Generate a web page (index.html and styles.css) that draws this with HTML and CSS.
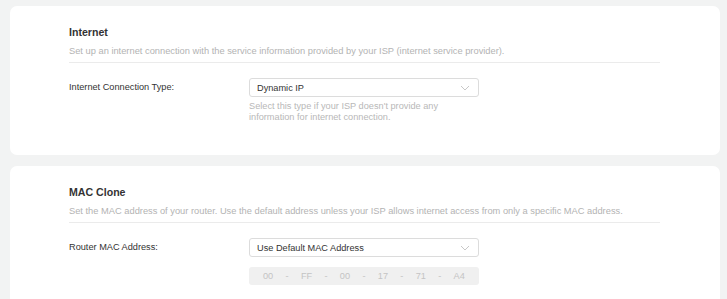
FILE: index.html
```html
<!DOCTYPE html>
<html>
<head>
<meta charset="utf-8">
<link rel="stylesheet" href="styles.css">
</head>
<body>
<div class="page">
  <section class="card">
    <h2 class="title">Internet</h2>
    <p class="desc">Set up an internet connection with the service information provided by your ISP (internet service provider).</p>
    <div class="row">
      <div class="label">Internet Connection Type:</div>
      <div class="field">
        <div class="select"><span>Dynamic IP</span><svg class="chev" width="10" height="6" viewBox="0 0 10 6"><path d="M1 1 L5 5 L9 1" fill="none" stroke="#c8c8c8" stroke-width="1"/></svg></div>
        <p class="hint">Select this type if your ISP doesn't provide any<br>information for internet connection.</p>
      </div>
    </div>
  </section>
  <section class="card card2">
    <h2 class="title">MAC Clone</h2>
    <p class="desc">Set the MAC address of your router. Use the default address unless your ISP allows internet access from only a specific MAC address.</p>
    <div class="row">
      <div class="label">Router MAC Address:</div>
      <div class="field">
        <div class="select"><span>Use Default MAC Address</span><svg class="chev" width="10" height="6" viewBox="0 0 10 6"><path d="M1 1 L5 5 L9 1" fill="none" stroke="#c8c8c8" stroke-width="1"/></svg></div>
        <div class="mac">
          <span>00</span><span class="dash">-</span><span>FF</span><span class="dash">-</span><span>00</span><span class="dash">-</span><span>17</span><span class="dash">-</span><span>71</span><span class="dash">-</span><span>A4</span>
        </div>
      </div>
    </div>
  </section>
</div>
</body>
</html>
```
FILE: styles.css
```css
html, body {
  margin: 0;
  padding: 0;
  background: #f2f3f3;
  font-family: "Liberation Sans", Arial, sans-serif;
  overflow: hidden;
}
.page {
  padding: 6px 7px 0 10px;
  display: flex;
  flex-direction: column;
  gap: 11px;
}
.card {
  background: #ffffff;
  border-radius: 7px;
  padding: 19px 0 0 59px;
  height: 130px;
}
.card2 {
  height: 160px;
}
.title {
  margin: 0;
  font-size: 10.6px;
  line-height: 14px;
  font-weight: bold;
  color: #333333;
}
.desc {
  margin: 7px 0 0 0;
  width: 591px;
  font-size: 9.3px;
  line-height: 11px;
  color: #b3b3b3;
  padding-bottom: 5px;
  border-bottom: 1px solid #ebebeb;
  white-space: nowrap;
}
.row {
  display: flex;
  margin-top: 15px;
}
.label {
  width: 180px;
  font-size: 9.2px;
  line-height: 19px;
  color: #333333;
}
.field {
  width: 230px;
}
.select {
  box-sizing: border-box;
  height: 19px;
  border: 1px solid #dcdcdc;
  border-radius: 3px;
  display: flex;
  align-items: center;
  justify-content: space-between;
  padding: 0 8px 0 7px;
  font-size: 9.2px;
  color: #333333;
}
.chev {
  display: block;
}
.hint {
  margin: 4px 0 0 0;
  font-size: 9.2px;
  line-height: 11px;
  color: #b8b8b8;
}
.mac {
  margin-top: 10px;
  height: 18px;
  background: #f0f0f0;
  border-radius: 3px;
  display: flex;
  align-items: center;
  padding: 0 14px;
  justify-content: space-between;
  font-size: 9.2px;
  color: #c4c4c4;
}
```
